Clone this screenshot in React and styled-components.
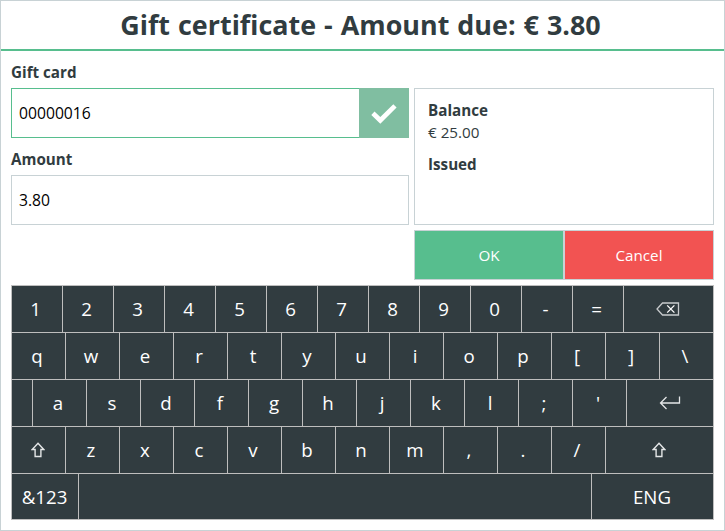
import React from 'react';
import styled, { createGlobalStyle } from 'styled-components';

const GlobalStyle = createGlobalStyle`
  * {
    box-sizing: border-box;
  }

  body {
    margin: 0;
    background: #ffffff;
  }

  button, input {
    font: inherit;
    border-radius: 0;
    outline: none;
  }
`

const CheckIcon = () => (
    <svg width="26" height="20" viewBox="0 0 26 20">
        <path d="M0.3 11 L3.5 7.6 L9.3 12.9 L22.3 0.3 L25.6 3.4 L9.3 19.8 Z" fill="#ffffff" />
    </svg>
)

const BackspaceIcon = () => (
    <svg width="24" height="14" viewBox="0 0 24 14" fill="none" stroke="#c8cbcd">
        <path d="M6.5 1 H22.5 V13 H6.5 L1 7 Z" strokeWidth="1.3" />
        <path d="M11.2 3.4 L18.4 10.6 M18.4 3.4 L11.2 10.6" stroke="#ffffff" strokeWidth="1.3" />
    </svg>
)

const EnterIcon = () => (
    <svg width="22" height="14" viewBox="0 0 22 14" fill="none" stroke="#e4e6e7" strokeWidth="1.3">
        <path d="M20.5 0.5 V7 H1.5 M7.5 1 L1.5 7 L7.5 13" />
    </svg>
)

const ShiftIcon = () => (
    <svg width="14" height="16" viewBox="0 0 14 16" fill="none" stroke="#e4e6e7" strokeWidth="1.4">
        <path d="M7 1.2 L12.8 7.5 H9.9 V14.5 H4.1 V7.5 H1.2 Z" />
    </svg>
)

const chars = (text, width) => text.split('').map((label) => ({ label, width }))

const rows = [
    [...chars('1234567890-=', 51), { icon: <BackspaceIcon />, name: 'Backspace' }],
    [...chars('qwertyuiop[]\\', 54)],
    [{ label: '', width: 21 }, ...chars("asdfghjkl;'", 54), { icon: <EnterIcon />, name: 'Enter' }],
    [{ icon: <ShiftIcon />, name: 'Left shift', width: 54 }, ...chars('zxcvbnm,./', 54), { icon: <ShiftIcon />, name: 'Right shift' }],
    [{ label: '&123', width: 67 }, { label: '', width: 513, name: 'Space' }, { label: 'ENG' }],
]

export default function App() {
    return (
        <Window>
            <GlobalStyle />
            <Header>
                <Title>Gift certificate - Amount due: € 3.80</Title>
            </Header>

            <Content>
                <Form>
                    <Label htmlFor="card">Gift card</Label>
                    <Field $active>
                        <Input id="card" defaultValue="00000016" />
                        <CheckButton aria-label="Check card"><CheckIcon /></CheckButton>
                    </Field>
                    <Label htmlFor="amount">Amount</Label>
                    <Field>
                        <Input id="amount" defaultValue="3.80" />
                    </Field>
                </Form>

                <Side>
                    <Details>
                        <Term>Balance</Term>
                        <Value>€ 25.00</Value>
                        <Term>Issued</Term>
                    </Details>
                    <Actions>
                        <Action $color="#57be8e">OK</Action>
                        <Action $color="#f25352">Cancel</Action>
                    </Actions>
                </Side>
            </Content>

            <Keyboard>
                {rows.map((row, i) => (
                    <KeyRow key={i}>
                        {row.map((item, j) => (
                            <Key key={j} $width={item.width} $icon={!!item.icon} aria-label={item.name}>
                                {item.icon || <KeyLabel>{item.label}</KeyLabel>}
                            </Key>
                        ))}
                    </KeyRow>
                ))}
            </Keyboard>
        </Window>
    )
}

const Window = styled.div`
  display: flex;
  flex-direction: column;
  width: 725px;
  height: 531px;
  border: 1px solid #c8d2d5;
  background: #ffffff;
  color: #313c40;
  font-family: 'Open Sans', 'Noto Sans', sans-serif;
  font-size: 15.7px;
  overflow: hidden;
`

const Header = styled.header`
  display: flex;
  align-items: center;
  justify-content: center;
  height: 50px;
  padding-right: 4px;
  border-bottom: 2px solid #57be8e;
`

const Title = styled.h1`
  margin: 0;
  font-size: 26.9px;
  line-height: 48px;
  font-weight: 700;
  word-spacing: 1px;
  white-space: nowrap;
`

const Content = styled.main`
  display: flex;
  gap: 5px;
  height: 229px;
  padding: 0 10px;
`

const Form = styled.div`
  width: 398px;
`

const Label = styled.label`
  display: block;
  height: 37px;
  padding-top: 10px;
  font-size: 15.2px;
  font-weight: 700;
  line-height: 22px;
`

const Field = styled.div`
  display: flex;
  height: 50px;
  border: 1px solid ${({ $active }) => $active ? '#57be8e' : '#c8d2d5'};
`

const Input = styled.input`
  flex: 1;
  min-width: 0;
  padding: 0 7px;
  border: 0;
  background: transparent;
  color: #000000;
`

const CheckButton = styled.button`
  display: flex;
  align-items: center;
  justify-content: center;
  width: 50px;
  margin: -1px -1px -1px 0;
  padding: 1px 0 0;
  border: 0;
  background: #80bea1;
`

const Side = styled.div`
  display: flex;
  flex-direction: column;
  gap: 5px;
  width: 300px;
  padding-top: 37px;
`

const Details = styled.dl`
  height: 137px;
  margin: 0;
  padding: 10px 13px;
  border: 1px solid #c8d2d5;
`

const Term = styled.dt`
  font-size: 15.2px;
  font-weight: 700;
  line-height: 22px;
`

const Value = styled.dd`
  margin: 0 0 10px;
  font-size: 15.2px;
  line-height: 22px;
`

const Actions = styled.div`
  display: flex;
  height: 50px;
`

const Action = styled.button`
  flex: 1;
  padding: 0;
  border: 1px solid #c8d2d5;
  background: ${({ $color }) => $color};
  color: #ffffff;
  font-size: 15.2px;
`

const Keyboard = styled.div`
  display: flex;
  flex-direction: column;
  width: 703px;
  height: 235px;
  margin: 5px 10px 0;
  border: 1px solid #bebebe;
  border-right: 0;
  border-bottom: 0;
  background: #313c40;
`

const Key = styled.button`
  display: flex;
  align-items: center;
  justify-content: center;
  flex: ${({ $width }) => $width ? `0 0 ${$width}px` : '1'};
  min-width: 0;
  padding: ${({ $icon, $width }) => $icon ? ($width ? '0 2px 0 0' : '0 1px 0 0') : '0 3px 2px 0'};
  border: 0;
  border-right: 1px solid #bebebe;
  border-bottom: 1px solid #bebebe;
  background: #313c40;
  color: #ffffff;
  font-size: 18.7px;
`

const KeyRow = styled.div`
  display: flex;
  flex: 0 0 47px;

  &:last-child {
    flex-basis: 46px;
  }

  &:last-child ${Key} {
    padding: 0 1px 0 0;
  }
`

const KeyLabel = styled.span`
  white-space: nowrap;
`
